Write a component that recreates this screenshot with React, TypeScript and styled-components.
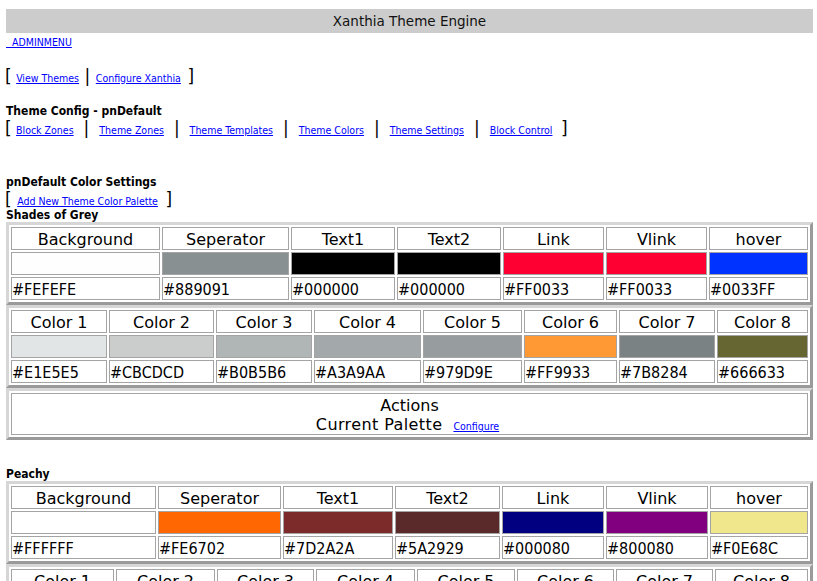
import React from "react";
import styled, { createGlobalStyle } from "styled-components";

const GlobalStyle = createGlobalStyle`
  html, body { margin: 0; padding: 0; background: #ffffff; }
  body { font-family: "DejaVu Sans", Verdana, sans-serif; color: #000; }
`;

const NARROW = `"DejaVu Sans Condensed", "DejaVu Sans", sans-serif`;
const WIDE = `"DejaVu Sans", Verdana, sans-serif`;

const Page = styled.div`
  padding: 9px 4px 24px 6px;
  display: flex;
  flex-direction: column;
`;

const TitleBar = styled.div`
  height: 24px;
  background: #cccccc;
  display: flex;
  align-items: center;
  justify-content: center;
  font-family: ${WIDE};
  font-size: 13.5px;
  color: #111;
`;

const Link = styled.a<{ $size?: number }>`
  font-family: ${NARROW};
  font-stretch: condensed;
  font-size: ${(p) => p.$size ?? 10.5}px;
  color: #0000ff;
  text-decoration: underline;
  cursor: pointer;
  white-space: pre;
`;

const AdminRow = styled.div`
  margin-top: 1px;
  height: 14px;
  line-height: 13px;
`;

const NavRow = styled.div<{ $gap: number; $top: number; $h?: number }>`
  display: flex;
  align-items: baseline;
  column-gap: ${(p) => p.$gap}px;
  margin-top: ${(p) => p.$top}px;
  height: ${(p) => p.$h ?? 16}px;
  line-height: 16px;
`;

const Mark = styled.span<{ $ml?: number; $mr?: number }>`
  font-family: ${WIDE};
  font-size: 17px;
  font-weight: normal;
  line-height: 16px;
  color: #000;
  margin-left: ${(p) => p.$ml ?? 0}px;
  margin-right: ${(p) => p.$mr ?? 0}px;
`;

const Heading = styled.div<{ $top: number; $h?: number }>`
  font-family: ${NARROW};
  font-stretch: condensed;
  font-weight: bold;
  font-size: 12px;
  margin-top: ${(p) => p.$top}px;
  height: ${(p) => p.$h ?? 14}px;
  line-height: ${(p) => p.$h ?? 14}px;
`;

const Table = styled.div<{ $cols: string }>`
  display: grid;
  grid-template-columns: ${(p) => p.$cols};
  grid-auto-rows: 23px;
  gap: 2px;
  padding: 2px;
  border: 3px solid;
  border-color: #d6d6d6 #9a9a9a #9a9a9a #d6d6d6;
  background: #ffffff;
`;

const HeadCell = styled.div`
  border: 1px solid #a4a4a4;
  padding-top: 2px;
  font-family: ${WIDE};
  font-size: 16px;
  line-height: 19px;
  text-align: center;
  white-space: nowrap;
  overflow: hidden;
`;

const SwatchCell = styled.div<{ $color: string }>`
  border: 1px solid #a4a4a4;
  background: ${(p) => p.$color};
`;

const HexCell = styled.div`
  border: 1px solid #a4a4a4;
  padding-top: 2px;
  font-family: ${NARROW};
  font-stretch: condensed;
  font-size: 16px;
  line-height: 19px;
  white-space: nowrap;
  overflow: hidden;
`;

const ActionsTable = styled.div`
  padding: 2px;
  border: 3px solid;
  border-color: #d6d6d6 #9a9a9a #9a9a9a #d6d6d6;
`;

const ActionsCell = styled.div`
  height: 42px;
  box-sizing: border-box;
  padding-top: 2px;
  border: 1px solid #a4a4a4;
  display: flex;
  flex-direction: column;
  align-items: center;
  font-family: ${WIDE};
  font-size: 16px;
  line-height: 19px;
`;

const ActionLine = styled.div`
  display: flex;
  align-items: baseline;
  gap: 11px;
  margin-left: -4px;
`;

const PaletteLabel = styled.span`
  letter-spacing: 0.4px;
`;

type Swatch = { label: string; hex: string };

const Grid: React.FC<{ cols: string; items: Swatch[] }> = ({ cols, items }) => (
  <Table $cols={cols}>
    {items.map((s) => (
      <HeadCell key={"h" + s.label}>{s.label}</HeadCell>
    ))}
    {items.map((s) => (
      <SwatchCell key={"s" + s.label} $color={s.hex} />
    ))}
    {items.map((s) => (
      <HexCell key={"x" + s.label}>{s.hex}</HexCell>
    ))}
  </Table>
);

const mainLabels = ["Background", "Seperator", "Text1", "Text2", "Link", "Vlink", "hover"];
const extraLabels = ["Color 1", "Color 2", "Color 3", "Color 4", "Color 5", "Color 6", "Color 7", "Color 8"];

const palettes = [
  {
    name: "Shades of Grey",
    top: 3,
    mainCols: "149px 127px 104px 104px 101px 101px 1fr",
    extraCols: "96px 105px 96px 107px 99px 93px 96px 1fr",
    main: ["#FEFEFE", "#889091", "#000000", "#000000", "#FF0033", "#FF0033", "#0033FF"],
    extra: ["#E1E5E5", "#CBCDCD", "#B0B5B6", "#A3A9AA", "#979D9E", "#FF9933", "#7B8284", "#666633"],
  },
  {
    name: "Peachy",
    top: 27,
    mainCols: "145px 123px 110px 105px 102px 102px 1fr",
    extraCols: "103px 99px 97px 99px 98px 97px 97px 1fr",
    main: ["#FFFFFF", "#FE6702", "#7D2A2A", "#5A2929", "#000080", "#800080", "#F0E68C"],
    extra: ["#FFE4C4", "#FFDAB9", "#FFCC99", "#FFA07A", "#FF9966", "#CC6633", "#993300", "#663300"],
  },
];

const configLinks = ["Block Zones", "Theme Zones", "Theme Templates", "Theme Colors", "Theme Settings", "Block Control"];

export default function App() {
  return (
    <>
      <GlobalStyle />
      <Page>
        <TitleBar>Xanthia Theme Engine</TitleBar>
        <AdminRow>
          <Link>{"  ADMINMENU"}</Link>
        </AdminRow>

        <NavRow $gap={5.5} $top={20}>
          <Mark $ml={-1} $mr={-1}>[</Mark>
          <Link>View Themes</Link>
          <Mark>|</Mark>
          <Link>Configure Xanthia</Link>
          <Mark $ml={1}>]</Mark>
        </NavRow>

        <Heading $top={20}>Theme Config - pnDefault</Heading>
        <NavRow $gap={10} $top={2}>
          {configLinks.map((l, i) => (
            <React.Fragment key={l}>
              {i === 0 ? <Mark $ml={-1} $mr={-5.6}>[</Mark> : <Mark>|</Mark>}
              <Link>{l}</Link>
            </React.Fragment>
          ))}
          <Mark $ml={-1.4}>]</Mark>
        </NavRow>

        <Heading $top={39}>pnDefault Color Settings</Heading>
        <NavRow $gap={5.5} $top={2} $h={14}>
          <Mark $ml={-1}>[</Mark>
          <Link>Add New Theme Color Palette</Link>
          <Mark $ml={2}>]</Mark>
        </NavRow>

        {palettes.map((p) => (
          <React.Fragment key={p.name}>
            <Heading $top={p.top}>{p.name}</Heading>
            <Grid cols={p.mainCols} items={mainLabels.map((label, i) => ({ label, hex: p.main[i] }))} />
            <Grid cols={p.extraCols} items={extraLabels.map((label, i) => ({ label, hex: p.extra[i] }))} />
            <ActionsTable>
              <ActionsCell>
                <div>Actions</div>
                <ActionLine>
                  <PaletteLabel>Current Palette</PaletteLabel>
                  <Link>Configure</Link>
                </ActionLine>
              </ActionsCell>
            </ActionsTable>
          </React.Fragment>
        ))}
      </Page>
    </>
  );
}
